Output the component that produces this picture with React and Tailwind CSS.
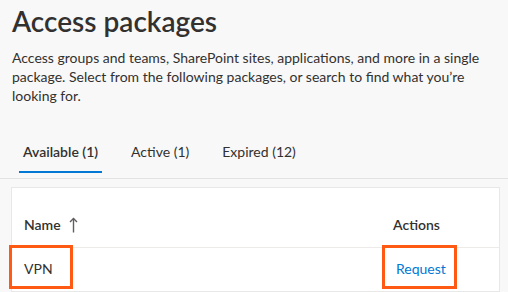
const tabs = [
  { label: "Available (1)", active: true },
  { label: "Active (1)", active: false },
  { label: "Expired (12)", active: false },
];

function SortUpIcon() {
  return (
    <svg width="9" height="16" viewBox="0 0 9 16" fill="none" className="text-[#605e5c]">
      <path d="M4.5 1.5V15.5" stroke="currentColor" strokeWidth="1.4" />
      <path d="M1 5L4.5 1.5L8 5" stroke="currentColor" strokeWidth="1.4" />
    </svg>
  );
}

export default function App() {
  return (
    <div className="min-h-screen w-[508px] overflow-hidden bg-[#f8f8f8] font-['Lato',sans-serif] text-[#323130]">
      {/* Header */}
      <div className="px-3 pt-[3px]">
        <h1 className="text-[28px] leading-[36px] font-semibold">Access packages</h1>
        <p className="mt-[9px] w-[480px] text-[14px] leading-[19px]">
          Access groups and teams, SharePoint sites, applications, and more in a single package. Select from the following packages, or search to find what you’re looking for.
        </p>
      </div>

      {/* Tabs */}
      <div className="mt-[37px] flex gap-[25px] border-b border-[#e3e3e3] pb-[5px] pl-[19px]">
        {tabs.map((t) => (
          <div key={t.label} className="flex flex-col">
            <span className={`px-[4px] text-[14px] leading-[20px] ${t.active ? "font-semibold" : ""}`}>{t.label}</span>
            <div className={`mt-[9px] h-[2px] ${t.active ? "bg-[#0078d4]" : "bg-transparent"}`} />
          </div>
        ))}
      </div>

      {/* Table card */}
      <div className="ml-[11px] mt-[8px] w-[489px] border border-[#e8e8e8] bg-white">
        <div className="grid grid-cols-[369px_76px_1fr] border-b border-[#edebe9] text-[14px] leading-[20px] font-semibold">
          <div className="flex items-end gap-[8px] pl-3 pt-[27px] pb-[12px]">
            <span>Name</span>
            <span className="mb-[2px]"><SortUpIcon /></span>
          </div>
          <div className="pl-3 pt-[27px] pb-[12px]">Actions</div>
          <div />
        </div>
        <div className="grid grid-cols-[369px_76px_1fr] text-[14px] leading-[20px]">
          <div className="relative pl-3 pt-[11px] pb-[12px]">
            VPN
            <div className="absolute left-[-3px] top-[-3px] h-[44px] w-[64px] border-[3px] border-[#fe5a14]" />
          </div>
          <div className="relative pl-[15px] pt-[11px] pb-[12px]">
            <span className="text-[#0078d4]">Request</span>
            <div className="absolute left-[1px] top-[-3px] h-[44px] w-[75px] border-[3px] border-[#fe5a14]" />
          </div>
          <div />
        </div>
      </div>
    </div>
  );
}
